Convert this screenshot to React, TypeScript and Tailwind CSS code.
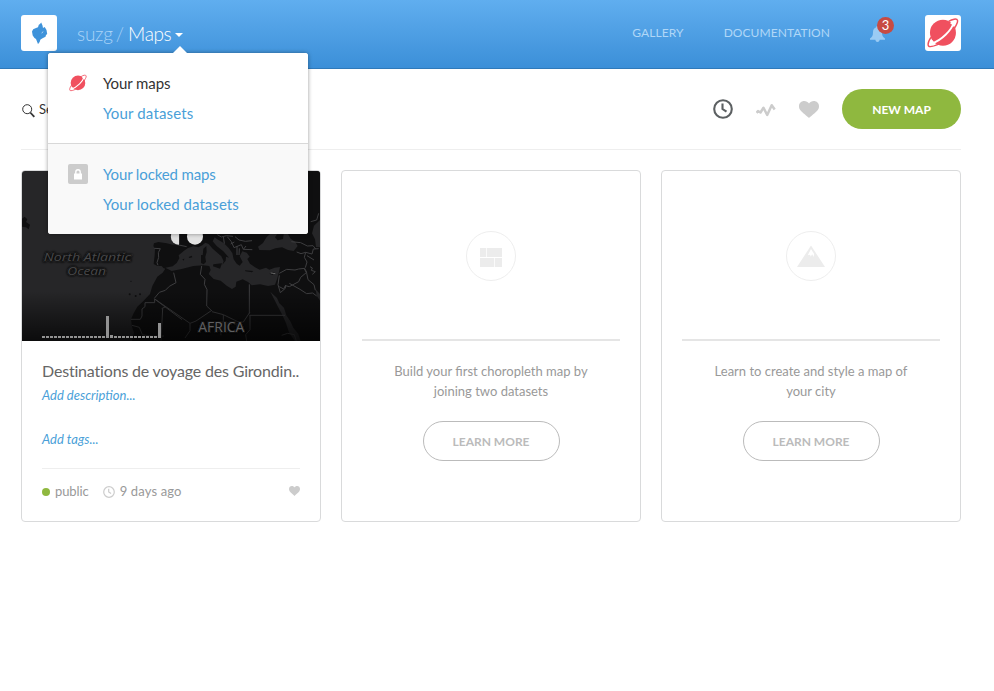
import React from "react";

function Planet({ size, bg = "#fff" }: { size: number; bg?: string }) {
  return (
    <svg width={size} height={size} viewBox="2 2 32.500 32" className="block shrink-0">
      <path d="M24 6.300C27.500 4 32.300 2.700 33 5.200c.6 2.500-2 6-4 9.300M6 22.500C4 25.500 2.500 29.500 3.600 31.200 5 33 10 31 14 29.300" fill={bg} stroke="#f0505f" strokeWidth="1.500" />
      <circle cx="18.200" cy="17.800" r="13.200" fill="#f0505f" />
      <path d="M29 7.500C27.500 14.500 17 25.500 6.500 28.800" fill="none" stroke={bg} strokeWidth="1.900" />
      <path d="M25.800 8.200c1.800-1 3.700-1.800 4.500-1.200.7.700-.1 2.500-1.300 4.500M7.600 25.500c-1.100 1.500-1.800 3-1.300 3.700.8.700 2.500 0 4-.6" fill={bg} stroke={bg} strokeWidth=".8" />
    </svg>
  );
}

function Heart({ w, h }: { w: number; h: number }) {
  return (
    <svg width={w} height={h} viewBox="0 0 20 17" preserveAspectRatio="none" className="block" fill="#ccc">
      <path d="M10 17C8.500 15.400 3 11.500 1.200 9 .3 7.700 0 6.500 0 5.200 0 2.200 2.300 0 5.200 0 7.200 0 9 .9 10 2.500 11 .9 12.800 0 14.800 0 17.700 0 20 2.200 20 5.200c0 1.300-.3 2.500-1.200 3.800C17 11.500 11.500 15.400 10 17z" />
    </svg>
  );
}

function Clock({ size, color, stroke }: { size: number; color: string; stroke: number }) {
  return (
    <svg width={size} height={size} viewBox="0 0 20 20" className="block" fill="none" stroke={color} strokeWidth={stroke}>
      <circle cx="10" cy="10" r="8.800" />
      <path d="M9.500 4.500V10l4 2.700" />
    </svg>
  );
}

function BasemapPreview() {
  const bars = Array.from({ length: 30 }, (_, i) => (i === 16 ? 66 : i === 17 ? 9 : i === 29 ? 45 : 6));
  return (
    <svg width="298" height="170" viewBox="6 93 894 510" className="block">
      <defs>
        <linearGradient id="shade" x1="0" y1="0" x2="0" y2="1">
          <stop offset="0" stopColor="#000" stopOpacity="0" />
          <stop offset="1" stopColor="#000" stopOpacity=".7" />
        </linearGradient>
        <filter id="halo" x="-10%" y="-40%" width="120%" height="180%">
          <feGaussianBlur stdDeviation="2.500" />
        </filter>
      </defs>
      <rect x="6" y="93" width="894" height="510" fill="#262628" />
      <g fill="#0f0f10">
        <path d="M6 236l8-6 8 8-4 8 12 8-4 14-8-6-12-2z" />
        <path d="M480 282V312L458 314 440 310 415 306 402 310 400 318 405 326 404 345 401 372 412 378 425 378 430 384 436 386 428 398 412 410 397 438 390 462 368 485 352 500 341 520 333 538 336 560 342 578 336 603H900V93H480z" />
        <circle cx="333" cy="424" r="2" /><circle cx="347" cy="468" r="3" /><circle cx="360" cy="463" r="3" /><circle cx="329" cy="463" r="3" />
      </g>
      <g fill="#262628">
        <path d="M436 383L458 379 470 369 478 355 476 346 492 332 504 324 520 319 535 322 547 316 556 308 566 312 578 326 592 338 604 349 611 364 607 374 617 362 618 350 627 353 610 334 590 318 578 304 584 292 592 298 612 310 626 324 637 339 641 358 650 371 659 377 668 366 659 349 667 334 680 338 689 350 682 357 690 371 705 382 719 389 738 383 748 389 764 383 780 381 777 395 771 418 765 434 744 438 720 433 695 436 684 426 668 418 649 425 647 440 636 447 620 437 602 422 581 417 566 402 572 390 568 378 550 376 520 378 485 387 455 393z" />
        <path d="M718 330L714 320 729 309 740 291 750 282 804 282 812 296 826 306 833 318 821 333 804 330 786 322 766 325 750 331z" />
        <path d="M751 455L758 462 771 474 778 490 792 503 799 526 811 544 820 563 835 582 842 603H824L807 577 798 550 787 525 773 499z" />
        <path d="M900 240L882 257 876 280 885 298 888 321 900 322zM887 448L900 462V482L890 467z" />
      </g>
      <g fill="#0f0f10">
        <path d="M550 326l9-8 1 18-4 14-8-3zM543 345l12 1 3 20-7 7-8-4zM580 373l26-3-6 16-21-7zM675 391l25 2-4 4-20-3zM748 401l16-5-6 9z" />
        <path d="M506 351l9-4 2 5-9 2zM487 358l6-2-2 6zM771 283l20 0-2 14-16 4-8-9z" />
      </g>
      <g fill="none" stroke="#3e3e40" strokeWidth="3" strokeLinejoin="round">
        <path d="M403 325l18 1-6 12 1 14-5 16 3 8M472 314l28 6M461 398l7 30-20 11-12 12-18 6-15 18M333 538h28l5-10V507l9-7v-12h29v-11l82 62M428 506l-5 96M425 506l12-6M336 556l22 6 9 22 30 5M397 589l35-1M404 477l106 73 18-7 46-31M545 378l-4 25 14 15-2 15 8 16-1 49 16 15M576 515l34 9 49 24 11-2 20-30M688 433v88M688 526h107M690 526v43l-13 15 3 19M610 525v20l-8 23 1 18M510 550v22l-15 22" />
        <path d="M778 400l22-12 25 2 11-3 18-2 6 12-18 15-6 13-28 15-12-3-5 10-13-7M778 406l-4 28 7 24 15-13 1-10M808 430l32 18 20 13 18-2 12 9M852 385l8 14 4 20 18 15 4 17M830 336l13 5 14-4 19 5 4-15 16-1M857 337l-4 15 8 14-5 17M861 347l21 13M872 245l18-5 6-20M814 305l28 3 20 10 17-1 8 10M785 586l18-6 20 4 6 19M592 284l12 7 15-4 20 2M610 289l3 22M622 290l12 15 8 18 22-9 6 14 27 1M643 306l-11 6M651 318v27M658 325l-1 20" />
        <path d="M645 290l12 10 19 4 20-2M670 328l8-10M870 380l7 4-3 7 12 4-9 8" />
      </g>
      <path d="M752 399l14 2" stroke="#666" strokeWidth="3" />
      <path d="M477 265.500v49a24 24 0 0 1 0-49z" fill="#dedede" />
      <circle cx="525" cy="290" r="24" fill="#e2e2e2" />
      <rect x="6" y="453" width="894" height="150" fill="url(#shade)" />
      {[true, false].map((halo) => (
        <g key={String(halo)} textAnchor="middle" fill={halo ? "none" : "#48484a"} stroke={halo ? "#111" : "none"} strokeWidth="7" filter={halo ? "url(#halo)" : undefined} fontFamily="Open Sans, Noto Sans, sans-serif">
          <text x="202" y="364" fontSize="34" fontStyle="italic" fontWeight="500" textLength="262" lengthAdjust="spacingAndGlyphs">North Atlantic</text>
          <text x="200" y="404" fontSize="34" fontStyle="italic" fontWeight="500" textLength="116" lengthAdjust="spacingAndGlyphs">Ocean</text>
          <text x="604" y="577" fontSize="41" textLength="138" lengthAdjust="spacingAndGlyphs" fill={halo ? "none" : "#606062"}>AFRICA</text>
        </g>
      ))}
      {bars.map((h, i) => (
        <rect key={i} x={66 + i * 12} y={594 - h} width="9" height={h} fill="#929292" />
      ))}
    </svg>
  );
}

function Header() {
  return (
    <header className="flex h-[69px] items-start border-b border-[#2f79b9] bg-linear-to-b from-[#60aeef] to-[#3b8fd8] pl-[21px] pr-[33px] pt-[15px]">
      <div className="flex size-9 items-center justify-center rounded-[3px] bg-white">
        <svg width="18" height="22" viewBox="0 0 18 22" fill="#3f93da">
          <path d="M11.200.5l1.300 3 .5 2.500 1.700-1L16.500 8l.7 4-1.200 1-.5 1.800-2.500 1.200-2.500 1.500-1 2.500H7.200L6 17l-1.500-1-1.800-2.500L2 9.500l1.200-2.300L6 6l2-.7.8-2.500 1.200-.8z" />
          <path d="M13 9.500l-1.200 1.800" stroke="#c8e1f7" strokeWidth=".8" />
          <path d="M7.200 19.500h2.500L8.800 21.500H7.600z" />
        </svg>
      </div>
      <div className="ml-5 flex h-9 items-center pt-px text-[19px] font-light leading-9 text-white">
        <span className="text-[#a9d3f7] tracking-[-0.2px]">suzg</span>
        <span className="ml-[3px] text-[#a9d3f7]">/</span>
        <span className="ml-1 tracking-[-0.4px]">Maps</span>
        <span className="ml-[4px] mt-0.5 border-x-4 border-t-4 border-x-transparent border-t-white" />
      </div>
      <nav className="ml-auto flex h-9 items-center text-xs text-[#b0d7f7]">
        <a className="mr-10 tracking-[0.1px]">GALLERY</a>
        <a className="mr-10 tracking-[0.06px]">DOCUMENTATION</a>
        <div className="relative mr-[39px] h-9 w-4">
          <svg width="15" height="16" viewBox="0 0 16 16" preserveAspectRatio="none" className="mt-[11px]" fill="#9acbf4">
            <path d="M8 0c.9 0 1.300.5 1.300 1.300 2.200.6 3.500 2.400 3.500 4.700 0 3.400.7 5 3.200 6.500v1.200H10.300C10 15 9.200 16 8 16s-2-1-2.300-2.300H0v-1.200C2.500 11 3.200 9.400 3.200 6c0-2.300 1.300-4.100 3.500-4.700C6.700.5 7.100 0 8 0z" />
          </svg>
          <span className="absolute left-[7px] top-[2px] flex size-[17px] items-center justify-center rounded-full bg-[#c74b43] text-[13px] text-white">3</span>
        </div>
        <div className="flex size-9 items-center justify-center rounded-[3px] bg-white">
          <Planet size={32} />
        </div>
      </nav>
    </header>
  );
}

function AccountMenu() {
  return (
    <div className="absolute left-[48px] top-[53px] w-[260px] rounded-[3px] bg-white text-[15px] leading-[30px] text-[#4a9fd8] shadow-[0_0_4px_rgba(0,0,0,0.4)]">
      <svg width="14" height="7" viewBox="0 0 14 7" className="absolute -top-[7px] left-[125px]" fill="#fff"><path d="M0 7L7 0l7 7z" /></svg>
      <div className="flex h-[90px] rounded-t-[3px] bg-white pl-5 pt-[15px]">
        <div className="mt-[5px] flex size-5 items-center justify-center"><Planet size={18} /></div>
        <ul className="ml-[15px]">
          <li className="tracking-[-0.1px] text-[#333]">Your maps</li>
          <li className="tracking-[0.15px]">Your datasets</li>
        </ul>
      </div>
      <div className="flex h-[91px] rounded-b-[3px] border-t border-[#d8d8d8] bg-[#f9f9f9] pl-5 pt-[15px]">
        <div className="mt-[5px] flex size-5 items-center justify-center rounded-[2px] bg-[#ccc]">
          <svg width="10" height="11" viewBox="0 0 10 11"><path d="M2.800 5V3a2.200 2.200 0 0 1 4.400 0v2" fill="none" stroke="#fff" strokeWidth="1.400" /><path d="M1 4.500h8V10.500H1z" fill="#fff" /></svg>
        </div>
        <ul className="ml-[15px]">
          <li className="tracking-[-0.14px]">Your locked maps</li>
          <li className="tracking-[0.04px]">Your locked datasets</li>
        </ul>
      </div>
    </div>
  );
}

function Toolbar() {
  return (
    <div className="flex h-[81px] items-center border-b border-[#eee]">
      <svg width="14" height="14" viewBox="0 0 14 14" className="ml-px mt-1 shrink-0" fill="none" stroke="#333"><circle cx="5.200" cy="5.200" r="4.500" strokeWidth="1" /><path d="M8.300 8.500l4 4.300" strokeWidth="1.800" /></svg>
      <span className="ml-[3px] mt-0.5 text-[13px] text-[#333]">Search</span>
      <div className="ml-auto flex items-center">
        <Clock size={20} color="#5c6062" stroke={2.100} />
        <svg width="20" height="14" viewBox="0 0 20 14" className="ml-[23px] mt-0.5" fill="none" stroke="#ccc" strokeWidth="2.500" strokeLinejoin="round"><path d="M.5 9.800l1.500-1.700L4.500 9.500l3-4.800 3.700 7.300 4.500-9.800 3 4.300" /></svg>
        <div className="ml-[23px]"><Heart w={20} h={17} /></div>
        <button className="ml-[23px] h-10 w-[119px] rounded-full bg-[#8fb83f] pt-px text-xs font-bold text-white">NEW MAP</button>
      </div>
    </div>
  );
}

function MapCard() {
  return (
    <article className="h-[352px] overflow-hidden rounded border border-[#d9dadb]">
      <BasemapPreview />
      <div className="px-5 pt-5">
        <h3 className="whitespace-nowrap text-base leading-5 tracking-[-0.18px] text-[#666]">Destinations de voyage des Girondin..</h3>
        <p className="mt-1 text-[13px] italic leading-5 text-[#4a9fd8]">Add description...</p>
        <p className="mt-6 text-[13px] italic leading-5 text-[#4a9fd8]">Add tags...</p>
        <div className="mt-[19px] flex items-center border-t border-[#eee] pt-3 text-[13px] leading-5 text-[#999]">
          <span className="mr-[5px] mt-0.5 size-2 rounded-full bg-[#8fb83f]" />
          <span className="tracking-[-0.1px]">public</span>
          <span className="ml-[14px] mr-[5px] mt-px"><Clock size={12} color="#ccc" stroke={2} /></span>
          <span className="tracking-[0.15px]">9 days ago</span>
          <span className="ml-auto"><Heart w={11} h={10} /></span>
        </div>
      </div>
    </article>
  );
}

function TutorialCard({ lines, children }: { lines: [string, string]; children: React.ReactNode }) {
  return (
    <article className="flex h-[352px] flex-col items-center rounded border border-[#d9dadb] px-5">
      <div className="mt-[60px] flex size-[50px] items-center justify-center rounded-full border border-[#eee]">{children}</div>
      <hr className="mt-[58px] w-full border-t-2 border-[#e5e5e5]" />
      <p className="mt-5 text-center text-[13px] leading-5 text-[#999]">{lines[0]}<br />{lines[1]}</p>
      <button className="mt-5 h-10 w-[137px] rounded-full border border-[#bbb] pt-px text-xs font-bold text-[#bbb]">LEARN MORE</button>
    </article>
  );
}

export default function App() {
  return (
    <div className="relative h-[691px] w-full overflow-hidden bg-white font-[Lato,sans-serif]">
      <Header />
      <main className="ml-[21px] w-[940px]">
        <Toolbar />
        <section className="mt-5 grid grid-cols-3 gap-5">
          <MapCard />
          <TutorialCard lines={["Build your first choropleth map by", "joining two datasets"]}>
            <svg width="22" height="19" viewBox="0 0 22 19" className="mt-[3px]" fill="#ececec"><path d="M0 0h6.300v9H0zM7 0h15v9H7zM0 10h14.300v9H0zM15 10h7v9h-7z" /></svg>
          </TutorialCard>
          <TutorialCard lines={["Learn to create and style a map of", "your city"]}>
            <svg width="28" height="22" viewBox="0 0 28 22" fill="#ececec"><path d="M14 .5L28 22H0z" /><path d="M14 4l3.200 5-.7 3-1.300-2.800-1.500 2.200-.7-1.700-2.200.6z" fill="#fff" /></svg>
          </TutorialCard>
        </section>
      </main>
      <AccountMenu />
    </div>
  );
}
